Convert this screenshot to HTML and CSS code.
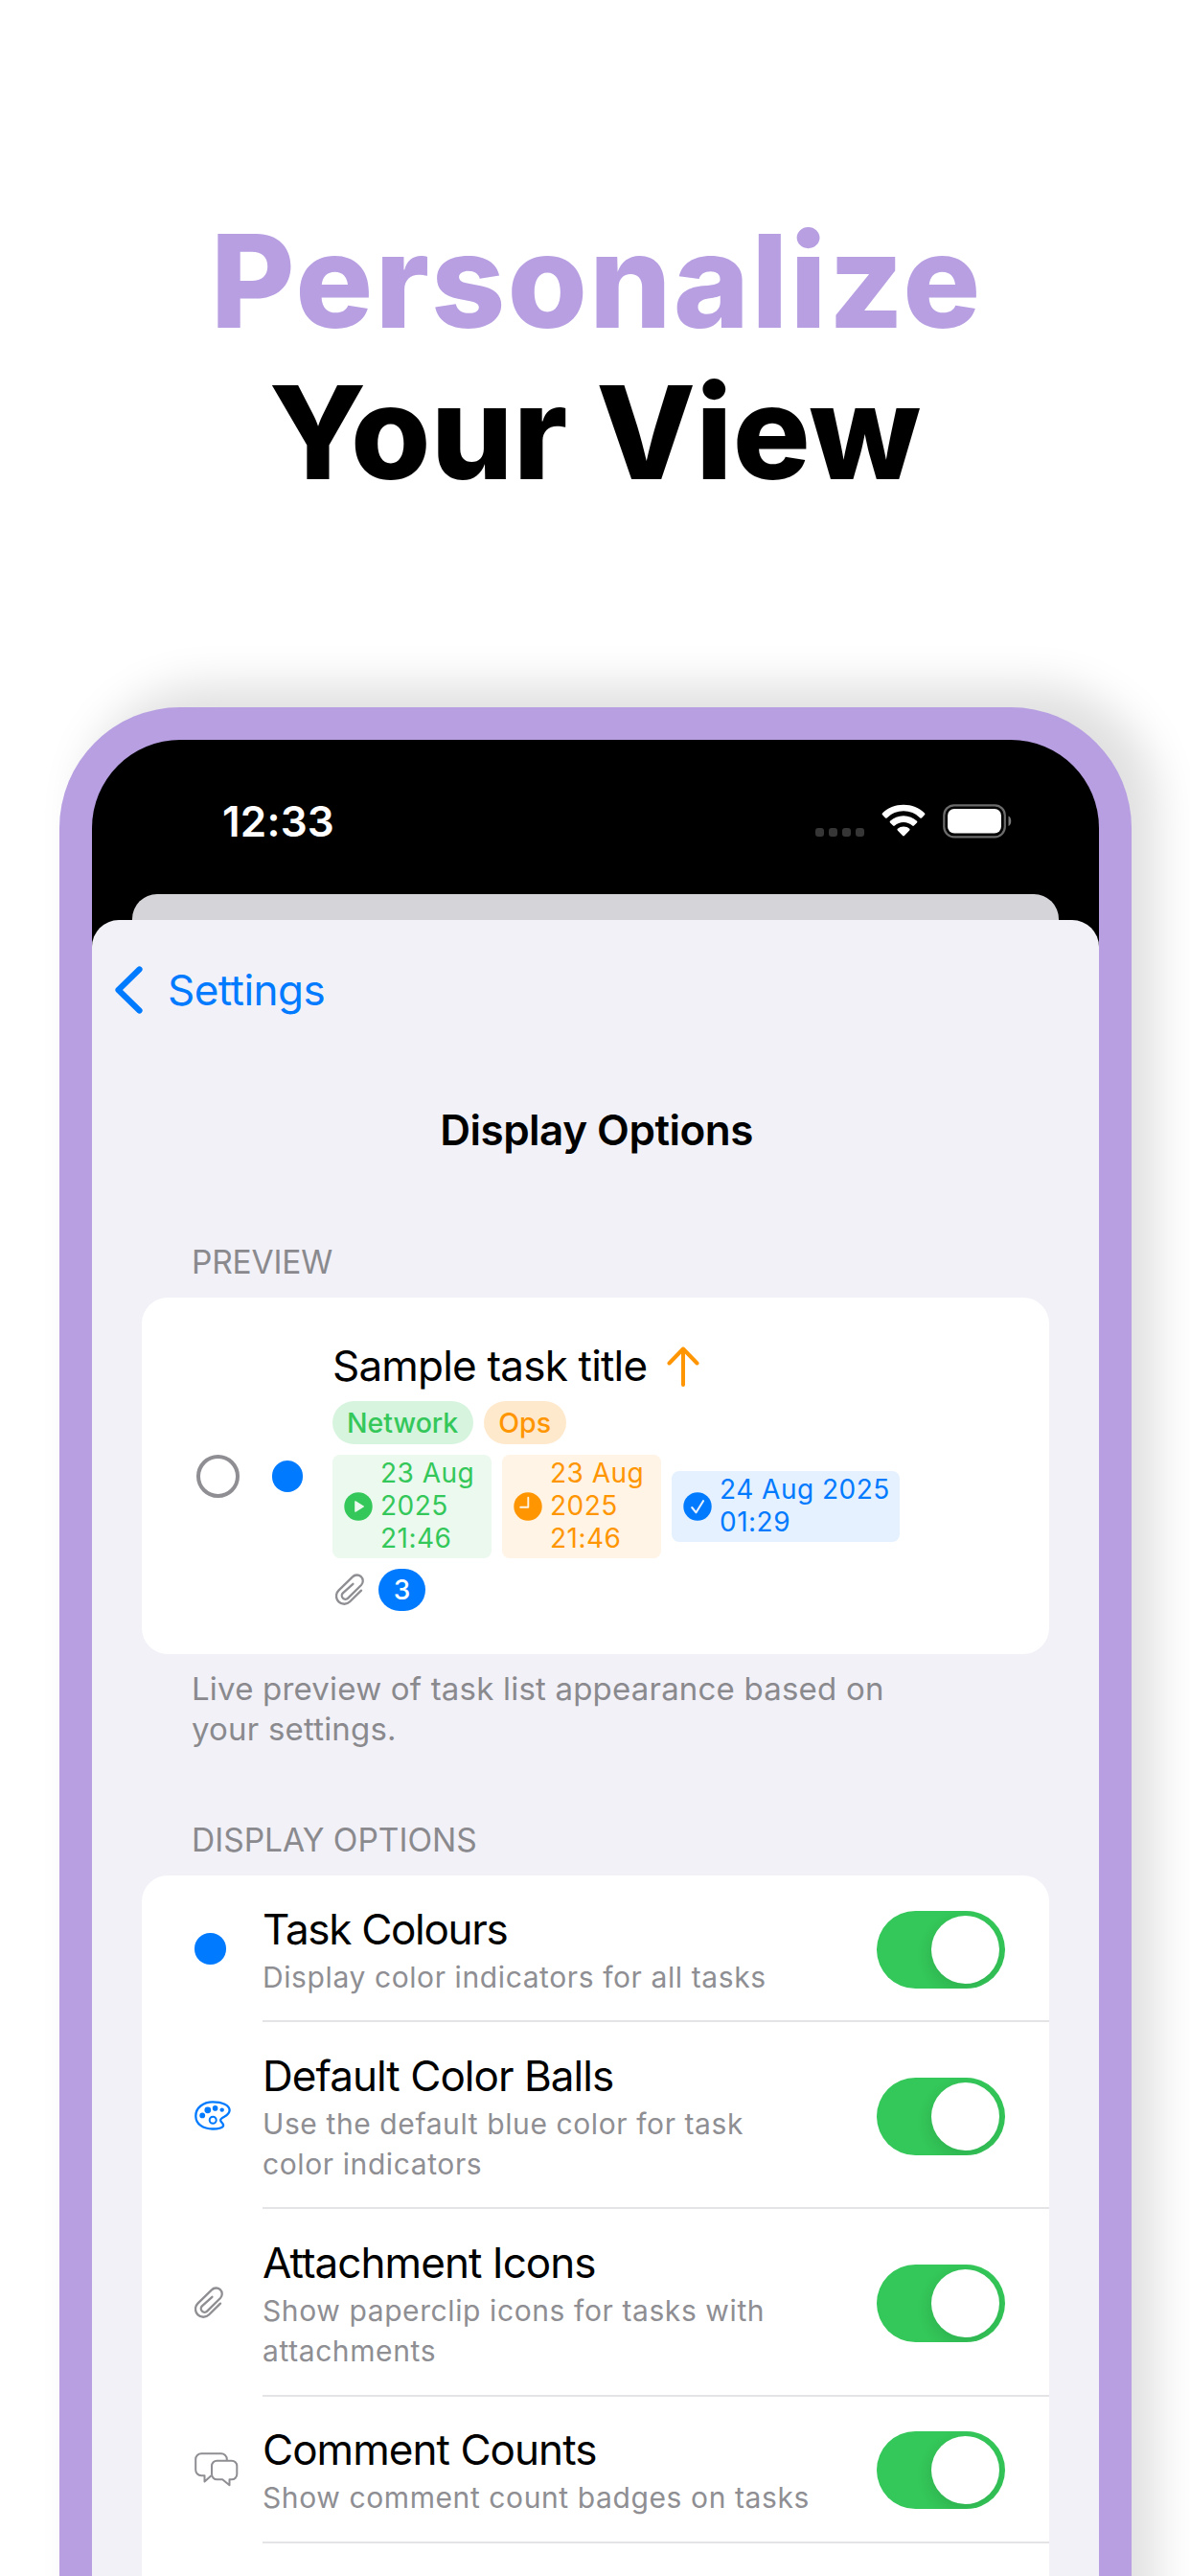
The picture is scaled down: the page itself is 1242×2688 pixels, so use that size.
FILE: index.html
```html
<!DOCTYPE html>
<html lang="en">
<head>
<meta charset="utf-8">
<title>Personalize Your View</title>
<link rel="stylesheet" href="styles.css">
</head>
<body>
<svg class="defs" aria-hidden="true">
  <symbol id="clip" viewBox="0 0 30 34">
    <path d="M27 17.6 15.2 29.3A8.2 8.2 0 0 1 3.4 17.6L18 3.4a6.1 6.1 0 0 1 9 8.600L13.200 25.600a3.700 3.700 0 0 1-5.400-5.200L18.400 10.800" fill="none" stroke="currentColor" stroke-width="2.300" stroke-linecap="round" stroke-linejoin="round"/>
  </symbol>
</svg>
<header class="hero">
  <h1 class="headline"><span class="accent">Personalize</span><span class="plain">Your View</span></h1>
</header>
<main class="phone">
  <div class="statusbar">
    <span class="time">12:33</span>
    <span class="status-icons">
      <span class="dots"><i></i><i></i><i></i><i></i></span>
      <svg class="wifi" viewBox="0 0 46 34"><path d="M23 .8c8.600 0 16.500 3.300 22 8.800.5.5.5 1.200 0 1.700l-3 3.100c-.5.5-1.200.5-1.700 0a24.500 24.500 0 0 0-34.600 0c-.5.5-1.200.5-1.700 0l-3-3.100c-.5-.5-.5-1.200 0-1.700C6.500 4.100 14.400.8 23 .8z" fill="#fff"/><path d="M23 12.200c5.400 0 10.300 2.100 14 5.500.5.500.5 1.200 0 1.700l-3.100 3.100c-.5.5-1.200.5-1.700 0a13.600 13.600 0 0 0-18.400 0c-.5.5-1.200.5-1.700 0L9 19.400c-.5-.5-.5-1.200 0-1.700 3.700-3.400 8.600-5.500 14-5.500z" fill="#fff"/><path d="M23 23.400c2.400 0 4.600.9 6.200 2.300.5.5.5 1.200 0 1.700l-5.300 5.700c-.5.5-1.300.5-1.800 0l-5.300-5.700c-.5-.5-.5-1.200 0-1.700a9.500 9.500 0 0 1 6.200-2.300z" fill="#fff"/></svg>
      <svg class="battery" viewBox="0 0 73 36"><rect x="1.300" y="1.300" width="63.500" height="33" rx="10.500" fill="none" stroke="#6b6b6b" stroke-width="2.200"/><rect x="5" y="5" width="56" height="25.600" rx="7" fill="#fff"/><path d="M68.500 12.500c3.700 1.600 3.700 9 0 10.600z" fill="#7a7a7a"/></svg>
    </span>
  </div>
  <div class="back-sheet"></div>
  <section class="sheet">
    <nav class="nav">
      <svg class="chevron" viewBox="0 0 30 50"><path d="M26.500 3.500 4.500 25l22 21.500" fill="none" stroke="#007aff" stroke-width="6.200" stroke-linecap="round" stroke-linejoin="round"/></svg>
      <span>Settings</span>
    </nav>
    <h2 class="title">Display Options</h2>

    <h3 class="label label-preview">PREVIEW</h3>
    <div class="card preview">
      <span class="ring"></span>
      <span class="ball"></span>
      <div class="task">
        <div class="task-title">Sample task title
          <svg class="arrow" viewBox="0 0 34 42"><path d="M17 40V2.500M2.500 17.500 17 2.500l14.500 15" fill="none" stroke="#ff9500" stroke-width="4" stroke-linecap="round" stroke-linejoin="round"/></svg>
        </div>
        <div class="tags"><span class="tag green">Network</span><span class="tag orange">Ops</span></div>
        <div class="dates">
          <div class="date green">
            <svg class="glyph" viewBox="0 0 30 30"><circle cx="15" cy="15" r="14.700" fill="#34c759"/><path d="M11.200 9.900v10.200a.7.7 0 0 0 1.100.6l8.400-5.100a.7.7 0 0 0 0-1.200l-8.400-5.100a.7.7 0 0 0-1.100.6z" fill="#ebf9ee"/></svg>
            <span>23 Aug<br>2025<br>21:46</span>
          </div>
          <div class="date orange">
            <svg class="glyph" viewBox="0 0 30 30"><circle cx="15" cy="15" r="14.700" fill="#ff9500"/><path d="M15.300 5.800v10H7.200" fill="none" stroke="#fff4e5" stroke-width="1.900" stroke-linecap="round" stroke-linejoin="round"/></svg>
            <span>23 Aug<br>2025<br>21:46</span>
          </div>
          <div class="date blue">
            <svg class="glyph" viewBox="0 0 30 30"><circle cx="15" cy="15" r="14.700" fill="#007aff"/><path d="m9.200 16 4.300 5.300L21 9.200" fill="none" stroke="#e5f1ff" stroke-width="2.100" stroke-linecap="round" stroke-linejoin="round"/></svg>
            <span>24 Aug 2025<br>01:29</span>
          </div>
        </div>
        <div class="meta"><svg class="clip"><use href="#clip"/></svg><span class="count">3</span></div>
      </div>
    </div>
    <p class="footnote">Live preview of task list appearance based on<br>your settings.</p>

    <h3 class="label">DISPLAY OPTIONS</h3>
    <ul class="card options">
      <li class="row">
        <span class="row-icon"><span class="ball"></span></span>
        <div class="row-body"><div class="row-text"><b class="tight">Task Colours</b><small>Display color indicators for all tasks</small></div><span class="toggle"></span></div>
      </li>
      <li class="row">
        <span class="row-icon"><svg class="palette" viewBox="0 0 38 31"><path d="M19 1.400C9 1.400 1.300 7.500 1.300 16S9 29.500 19 29.500c5 0 9.500-.6 10.900-2.900 1.300-2.600-2.900-3.900-2.800-6.300.1-3.400 9.500-3.600 9.500-10.200C36.600 4.800 29 1.400 19 1.400z" fill="none" stroke="#007aff" stroke-width="2.300"/><g fill="#007aff"><circle cx="8.200" cy="15.400" r="2.900"/><circle cx="13.800" cy="9.800" r="3.400"/><circle cx="21.600" cy="7.900" r="2.800"/><circle cx="28.700" cy="9.600" r="2.200"/></g><circle cx="19.200" cy="20.300" r="3.500" fill="none" stroke="#007aff" stroke-width="2"/></svg></span>
        <div class="row-body"><div class="row-text"><b>Default Color Balls</b><small>Use the default blue color for task<br>color indicators</small></div><span class="toggle"></span></div>
      </li>
      <li class="row">
        <span class="row-icon"><svg class="clip"><use href="#clip"/></svg></span>
        <div class="row-body"><div class="row-text"><b>Attachment Icons</b><small>Show paperclip icons for tasks with<br>attachments</small></div><span class="toggle"></span></div>
      </li>
      <li class="row">
        <span class="row-icon"><svg class="bubbles" viewBox="0 0 46 36"><path d="M17.500 24.200 10.500 30.500v-6.300H7.200a6 6 0 0 1-6-6v-11a6 6 0 0 1 6-6h20.600a6 6 0 0 1 6 6v1.500" fill="none" stroke="#8e8e93" stroke-width="2" stroke-linejoin="round"/><path d="M23.500 8.700h15.300a5.500 5.500 0 0 1 5.500 5.500v8.600a5.500 5.500 0 0 1-5.500 5.500h-2.300v6l-7.300-6h-5.700a5.500 5.500 0 0 1-5.500-5.500v-8.600a5.500 5.500 0 0 1 5.500-5.500z" fill="none" stroke="#8e8e93" stroke-width="2" stroke-linejoin="round"/></svg></span>
        <div class="row-body"><div class="row-text"><b>Comment Counts</b><small>Show comment count badges on tasks</small></div><span class="toggle"></span></div>
      </li>
    </ul>
  </section>
</main>
</body>
</html>
```
FILE: styles.css
```css
* { box-sizing: border-box; }

html { height: 2688px; overflow: hidden; }

body {
  margin: 0;
  width: 1242px;
  height: 2688px;
  overflow: hidden;
  background: #fff;
  color: #000;
  font-family: Inter, "Liberation Sans", sans-serif;
}

h1, h2, h3, p, ul { margin: 0; padding: 0; }
.defs { display: none; }

/* Headline */
.hero { height: 738px; padding-top: 214px; }
.headline {
  display: flex;
  flex-direction: column;
  align-items: center;
  font-size: 135px;
  line-height: 158px;
  font-weight: 800;
}
.accent { color: #b79fe2; letter-spacing: 2px; padding-left: 3px; }
.plain { letter-spacing: .2px; }

/* Device frame, running past the bottom edge of the page */
.phone {
  width: 1119px;
  height: 2060px;
  margin-left: 62px;
  border: 34px solid #b79fe2;
  border-bottom: 0;
  border-radius: 126px 126px 0 0;
  background: #000;
  box-shadow: 26px -23px 46px rgba(0, 0, 0, .125);
  overflow: hidden;
}

.statusbar {
  display: flex;
  justify-content: space-between;
  height: 161px;
  padding: 58px 90px 0 136px;
}
.time {
  color: #fff;
  font-size: 44px;
  line-height: 54px;
  font-weight: 600;
  letter-spacing: .2px;
}
.status-icons { display: flex; align-items: flex-start; padding-top: 9px; }
.dots { display: flex; gap: 4.700px; padding-top: 25px; margin-right: 18px; }
.dots i { width: 9.300px; height: 9px; border-radius: 3px; background: #363636; }
.wifi { width: 46px; height: 34px; margin-right: 18px; }
.battery { width: 73px; height: 36px; }

.back-sheet {
  height: 27px;
  margin: 0 42px;
  border-radius: 26px 26px 0 0;
  background: #d5d4d9;
}

.sheet {
  height: 1840px;
  border-radius: 28px 28px 0 0;
  background: #f2f1f7;
}

.nav {
  display: flex;
  align-items: center;
  gap: 26px;
  height: 146px;
  padding-left: 23px;
  color: #007aff;
  font-size: 44px;
  letter-spacing: -.55px;
}
.chevron { width: 30px; height: 50px; }

.title {
  height: 175px;
  padding-left: 2px;
  text-align: center;
  font-size: 44px;
  line-height: 147px;
  font-weight: 600;
  letter-spacing: -.5px;
}

.label {
  height: 73px;
  padding-left: 104px;
  color: #8a8a8e;
  font-size: 33.500px;
  font-weight: 400;
  line-height: 73px;
}
.label-preview { letter-spacing: -.2px; }

.card {
  width: 947px;
  margin-left: 52px;
  border-radius: 27px;
  background: #fff;
}

/* Preview card */
.preview {
  display: flex;
  height: 372px;
  padding: 45px 0 0 57px;
}
.ring {
  width: 45px;
  height: 45px;
  margin-top: 118.500px;
  border: 4px solid #8e8e93;
  border-radius: 50%;
}
.ball {
  display: block;
  width: 32.500px;
  height: 32.500px;
  border-radius: 50%;
  background: #007aff;
}
.preview > .ball { margin: 125px 31px 0 33.500px; }
.task-title {
  display: flex;
  height: 54px;
  font-size: 44px;
  line-height: 53px;
  letter-spacing: -.8px;
  gap: 21px;
}
.arrow { width: 34px; height: 42px; margin-top: 6px; }
.tags { display: flex; gap: 11px; margin-top: 9px; }
.tag {
  height: 45px;
  padding: 0 16px 0 15px;
  border-radius: 23px;
  font-size: 28.500px;
  line-height: 45px;
  font-weight: 450;
}
.tag.green { background: #d6f4de; color: #34c759; }
.tag.orange { background: #ffe9cc; color: #ff9500; }

.dates { display: flex; align-items: center; gap: 11px; margin-top: 11px; }
.date {
  display: flex;
  align-items: center;
  gap: 8px;
  width: 166px;
  padding: 3px 0 3px 12px;
  border-radius: 8px;
  font-size: 28px;
  line-height: 33.900px;
  letter-spacing: .5px;
}
.date.green { background: #ebf9ee; color: #34c759; }
.date.orange { background: #fff4e5; color: #ff9500; }
.date.blue { width: 238px; background: #e5f1ff; color: #007aff; }
.glyph { width: 30px; height: 30px; }
.meta { display: flex; align-items: center; gap: 15px; margin: 11px 0 0 3px; }
.clip { width: 30px; height: 34px; color: #8e8e93; }
.count {
  width: 49px;
  height: 44px;
  border-radius: 22px;
  background: #007aff;
  color: #fff;
  font-size: 28px;
  font-weight: 450;
  line-height: 44px;
  text-align: center;
}

.footnote {
  height: 158px;
  padding: 15px 0 0 104px;
  color: #8a8a8e;
  font-size: 33px;
  line-height: 42.400px;
  letter-spacing: .2px;
}

/* Option list */
.options {
  height: 860px;
  border-radius: 27px 27px 0 0;
  list-style: none;
}
.row { display: flex; }
.row-icon {
  display: flex;
  align-items: center;
  width: 126px;
  padding-left: 55px;
}
.palette { width: 38px; height: 31px; }
.bubbles { width: 46px; height: 36px; }
.row-body {
  display: flex;
  flex: 1;
  align-items: center;
  justify-content: space-between;
  padding-right: 46.500px;
  border-bottom: 2px solid #e4e4e6;
}
.row-text { padding: 29.500px 0 24.200px; }
.row-text b {
  display: block;
  height: 55.200px;
  font-size: 44px;
  font-weight: 400;
  line-height: 52px;
  letter-spacing: -.95px;
}
.row-text .tight { letter-spacing: -1.300px; }
.row-text small {
  display: block;
  color: #8e8e93;
  font-size: 30px;
  line-height: 42.200px;
  letter-spacing: .6px;
}
.toggle {
  display: flex;
  justify-content: flex-end;
  width: 134px;
  height: 81px;
  margin-top: 3px;
  padding: 5px 5.500px;
  border-radius: 41px;
  background: #34c759;
  overflow: hidden;
}
.toggle::after {
  content: "";
  width: 71px;
  height: 71px;
  border-radius: 50%;
  background: #fff;
  box-shadow: -1px 6px 16px rgba(0, 0, 0, .11);
}
```
